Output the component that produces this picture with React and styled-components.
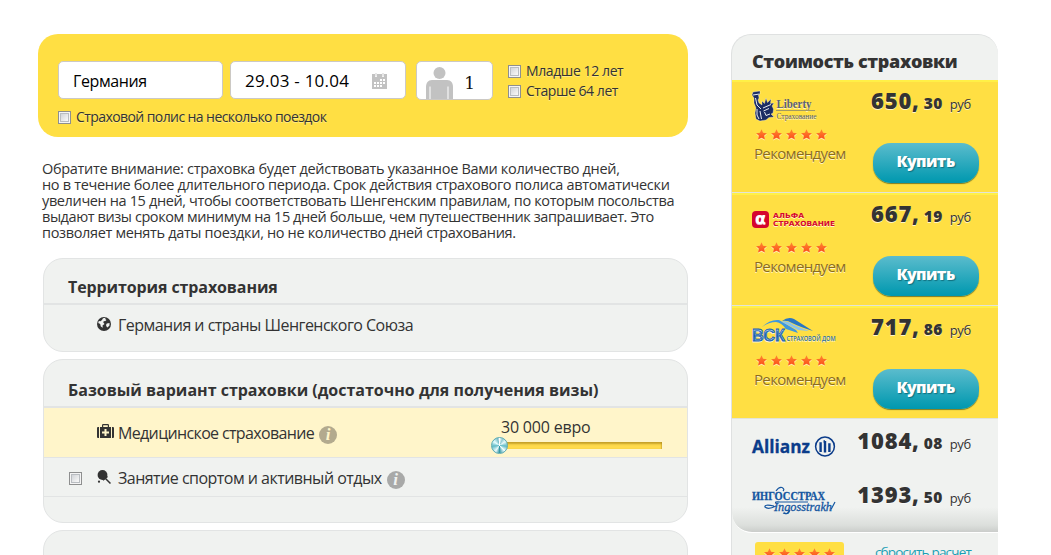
import React from "react";
import styled, { createGlobalStyle, css } from "styled-components";

const Global = createGlobalStyle`
  * { box-sizing: border-box; }
  html, body { margin: 0; background: #fff; }
  body {
    height: 555px; overflow: hidden; color: #333;
    font-family: "Open Sans", "Noto Sans", sans-serif; font-size: 14px;
  }
`;

const Page = styled.div`
  display: flex;
  align-items: flex-start;
  gap: 43px;
  width: 1051px;
  height: 555px;
  padding: 34px 0 0 38px;
  overflow: hidden;
`;
const Main = styled.main`
  width: 650px;
  flex: none;
`;
const Text = styled.span`
  display: block;
  white-space: nowrap;
  letter-spacing: ${(p) => p.$ls || 0}px;
`;

/* ---------- search form ---------- */
const SearchPanel = styled.form`
  height: 103px;
  padding: 27px 20px 0;
  border-radius: 20px;
  background: #ffdf43;
`;
const Fields = styled.div`
  display: flex;
  align-items: flex-start;
  height: 39px;
`;
const Field = styled.div`
  display: flex;
  align-items: center;
  width: ${(p) => p.$w}px;
  height: ${(p) => p.$h || 38}px;
  margin-right: ${(p) => p.$gap}px;
  padding: ${(p) => p.$pad || "2px 18px 0 14px"};
  justify-content: space-between;
  border: 1px solid #ccc9c4;
  border-radius: 5px;
  background: #fff;
  color: #000;
  font-size: ${(p) => p.$size || 16}px;
  line-height: 24px;
`;
const Count = styled.span`
  font: 17px/20px "DejaVu Serif", serif;
  color: #111;
  margin: 0 7px 0 0;
`;
const Checks = styled.div`
  display: grid;
`;
const Check = styled.label`
  display: flex;
  align-items: center;
  gap: 5px;
  height: 20px;
  font-size: 14px;
  line-height: 18px;
  margin-top: ${(p) => p.$top || 0}px;
  text-shadow: 0 1px 0 rgba(255, 255, 255, 0.35);
`;
const Box = styled.span`
  flex: none;
  width: 13px;
  height: 13px;
  border: 1px solid #8e8f8f;
  box-shadow: inset 0 0 0 1px #f4f4f4, inset 0 0 0 2px #b9bdc1;
  background: linear-gradient(135deg, #c6cacf, #f6f6f6 75%);
`;

const Notice = styled.p`
  margin: 24px 0 17px 4px;
  font-size: 14.5px;
  line-height: 16px;
`;

/* ---------- option panels ---------- */
const Panel = styled.section`
  height: ${(p) => p.$h}px;
  margin: 0 0 7px 5px;
  border: 1px solid #e2e4e4;
  border-radius: 20px;
  background: #f0f2f0;
`;
const PanelTitle = styled.h2`
  height: ${(p) => p.$h || 46}px;
  margin: 0;
  padding: ${(p) => p.$top || 17}px 0 0 24px;
  border-bottom: 2px solid #e2e4e4;
  font-size: 16px;
  line-height: 22px;
  font-weight: 700;
`;
const Row = styled.div`
  display: flex;
  align-items: center;
  height: ${(p) => p.$h}px;
  padding: ${(p) => p.$top || 0}px 0 0 25px;
  font-size: 16px;
  line-height: 22px;
  ${(p) => p.$line && css`border-bottom: 1px solid #e2e4e4;`}
  ${(p) => p.$active && css`background: #fff5ca;`}
`;
const CheckSlot = styled.span`
  flex: none;
  display: flex;
  width: 28px;
  padding-top: 2px;
`;
const IconSlot = styled.span`
  flex: none;
  display: flex;
  width: 21px;
  padding-bottom: ${(p) => p.$lift || 2}px;
`;
const Info = styled.span`
  display: flex;
  justify-content: center;
  width: 18px;
  height: 18px;
  margin: 4px 0 0 5px;
  border-radius: 50%;
  background: ${(p) => p.$bg};
  color: ${(p) => p.$fg};
  font: italic bold 17px/17px "Liberation Serif", serif;
`;
const Range = styled.div`
  position: relative;
  width: 162px;
  height: 47px;
  margin: 0 25px 0 auto;
  padding-left: 1px;
`;
const RangeValue = styled.div`
  height: 29px;
  padding-top: 6px;
`;
const Track = styled.div`
  height: 7px;
  background: #ffda4b;
  box-shadow: inset 0 2px 2px rgba(130, 95, 0, 0.45), inset -1px 0 1px rgba(130, 95, 0, 0.2);
  margin-top: 3px;
`;
const Knob = styled.span`
  position: absolute;
  left: -9px;
  top: 27px;
  width: 17px;
  height: 17px;
  border-radius: 50%;
  border: 1px solid #5aa9b3;
  background: conic-gradient(#fff 0deg, #8fcbd3 25deg, #e8fafa 55deg, #5fbac6 95deg, #f2ffff 135deg, #3598a6 180deg, #effcfc 215deg, #5fbac6 265deg, #e8ffff 305deg, #76bdc8 345deg, #fff 360deg);
`;

/* ---------- price column ---------- */
const Side = styled.aside`
  width: 267px;
  height: 560px;
  flex: none;
  border: 1px solid #dfe1e1;
  border-right: 0;
  border-bottom: 0;
  border-radius: 20px 20px 0 0;
  background: #f0f2f0;
`;
const SideTitle = styled.h2`
  height: 45px;
  margin: 0;
  padding: 14px 0 0 20px;
  font-size: 18px;
  line-height: 24px;
  font-weight: 800;
`;
const Offer = styled.article`
  display: grid;
  grid-template-columns: 100px 1fr;
  height: 113px;
  padding: 0 19px 0 20px;
  border-bottom: 1px solid #e2e4d8;
  box-shadow: inset 0 2px 0 #fff047;
  background: #ffdf43;
  text-shadow: 0 1px 0 rgba(255, 255, 255, 0.7);
`;
const OfferInfo = styled.div`
  padding-top: 11px;
`;
const LogoSlot = styled.div`
  display: flex;
  height: 38px;
`;
const Recommend = styled.div`
  padding: 2px 0 0 2px;
  font-size: 15px;
  line-height: 20px;
  color: #8c6c1c;
`;
const OfferBuy = styled.div`
  display: flex;
  flex-direction: column;
  align-items: flex-end;
`;
const Price = styled.div`
  display: flex;
  align-items: baseline;
  height: 30px;
  margin: ${(p) => p.$top || 0}px ${(p) => p.$right || 0}px 0 0;
  line-height: 30px;
  white-space: nowrap;
  text-shadow: 0 1px 0 rgba(255, 255, 255, 0.7);
`;
const Rub = styled.span`
  font-size: 22px;
  font-weight: 800;
  letter-spacing: 0.8px;
`;
const Kop = styled.span`
  margin-left: 4px;
  font-size: 15.5px;
  font-weight: 800;
  letter-spacing: 0.4px;
`;
const Cur = styled.span`
  margin-left: 7px;
  font-size: 13px;
  letter-spacing: -0.3px;
`;
const Buy = styled.button`
  width: 106px;
  height: 40px;
  margin-top: 28px;
  padding: 0 1px 5px 0;
  border: 0;
  border-radius: 18px;
  background: linear-gradient(#5bbccd, #0c9db3 85%, #0098af);
  box-shadow: 0 1px 1px #7b7a26;
  color: #fff;
  font: 800 16px/22px "Open Sans", sans-serif;
  letter-spacing: -0.6px;
  text-shadow: 1px 1px 1px rgba(0, 60, 70, 0.5);
`;
const PlainOffers = styled.div`
  height: 114px;
  padding: 0 20px;
  border-bottom: 1px solid #fff;
  border-radius: 0 0 0 20px;
  background: linear-gradient(rgba(240,242,240,0) 78%, #dcdfdc 94%, #cbcdcb);
`;
const PlainOffer = styled.article`
  display: grid;
  grid-template-columns: 84px 1fr;
  justify-items: end;
  height: 54px;
`;
const PlainLogo = styled.div`
  width: 84px;
  padding-top: ${(p) => p.$top}px;
`;
const Footer = styled.footer`
  display: flex;
  justify-content: space-between;
  padding: 9px 27px 0 23px;
`;
const Badge = styled.div`
  width: 89px;
  height: 30px;
  padding: 6px 0 0 8px;
  border-radius: 3px;
  background: #ffdf43;
`;
const Reset = styled.a`
  font-size: 13.5px;
  line-height: 21px;
  color: #1b9fb4;
`;

const Art = styled.svg`
  display: block;
  flex: none;
  overflow: visible;
`;

const STAR = "M5.5 0.3 L7.1 3.8 L10.9 4.2 L8.1 6.8 L8.9 10.6 L5.5 8.7 L2.1 10.6 L2.9 6.8 L0.1 4.2 L3.9 3.8Z";
function Stars({ left = 4 }) {
  return (
    <Art width="84" height="12" viewBox="0 0 84 12">
      <defs>
        <linearGradient id="star" x1="0" y1="0" x2="0" y2="1">
          <stop offset="0" stopColor="#ff8a2e" />
          <stop offset="1" stopColor="#fb4a1c" />
        </linearGradient>
      </defs>
      {[0, 1, 2, 3, 4].map((i) => (
        <g key={i} transform={`translate(${left + i * 15} 0)`}>
          <path d={STAR} fill="#fff" opacity=".6" transform="translate(0 1)" />
          <path d={STAR} fill="url(#star)" />
        </g>
      ))}
    </Art>
  );
}

const CalendarIcon = () => (
  <Art width="15" height="16" viewBox="0 0 15 16">
    <path fill="#c2c2c2" d="M0 1h3v3h2V1h5v3h2V1h3v15H0zM3.6 0h.8v3.4h-.8zM10.6 0h.8v3.4h-.8z" />
    <path fill="#fff" d="M8 6h2v2H8zM11 6h2v2h-2zM2 9h2v2H2zM5 9h2v2H5zM8 9h2v2H8zM11 9h2v2h-2zM2 12h2v2H2zM5 12h2v2H5zM8 12h2v2H8z" />
  </Art>
);
const PersonIcon = () => (
  <Art width="27" height="32" viewBox="0 0 27 32">
    <g fill="#c2c2c2">
      <circle cx="13.5" cy="6" r="6" />
      <path d="M6 13h15c4 0 6 3 6 7v12h-4.500V19.500h-1V32h-17V19.500h-1V32H0V20c0-4 2-7 6-7z" />
    </g>
  </Art>
);
const GlobeIcon = () => (
  <Art width="14" height="14" viewBox="0 0 14 14">
    <circle cx="7" cy="7" r="7" fill="#333" />
    <path fill="#f0f2f0" d="M6 1.200 8.500.8 8.200 2 9.500 3 8 4.300 7 4 6.200 5.300 7.500 7 5.500 8.500 5.800 10.800 3.800 9.500 3.200 7 1.200 6 1.800 4 3.500 4.200 5 3zM9.800 6.500 12.500 6 12.500 8.500 10.500 10.500 9.500 9.500 9 8z" />
  </Art>
);
const MedkitIcon = () => (
  <Art width="17" height="14" viewBox="0 0 17 14">
    <path fill="#333" d="M0 4Q0 3 1 3h1v11H1q-1 0-1-1zM17 4q0-1-1-1h-1v11h1q1 0 1-1zM3 3h2V1.200Q5 0 6.200 0h4.600Q12 0 12 1.200V3h2v11H3zM6.200 3h4.600V1.200H6.200z" />
    <path fill="#fff5ca" d="M7.500 5h2v2.500H12v2H9.500V12h-2V9.500H5v-2h2.500z" />
  </Art>
);
const RacketIcon = () => (
  <Art width="14" height="14" viewBox="0 0 14 14">
    <circle cx="5.500" cy="5" r="4.900" fill="#333" />
    <circle cx="2" cy="11.700" r="1.100" fill="#333" />
    <path d="M8 8 13.500 13.500" stroke="#333" strokeWidth="1.500" />
    <path d="M6 10.300 10.500 6.500" stroke="#333" strokeWidth="1.300" />
  </Art>
);

const LibertyLogo = () => (
  <Art width="84" height="31" viewBox="0 0 84 31">
    <path
      fill="#1c2d63"
      stroke="#fff"
      strokeOpacity=".55"
      strokeWidth=".6"
      d="M1 1 8 0 8 3 6.500 4 7 7 6 9 7 12 10 14 10 10 12.500 12.500 14 7 15.500 11.500 19 8 18.500 12.500 22 12 20 15 21.500 18 21 22 19 23 22 26 17 26.500 14 29 8 30 4 28 3 22 4 17 2 12 2 7 0 4z"
    />
    <path
      fill="none"
      stroke="#fff"
      strokeWidth=".9"
      d="M1 4 7.500 3M3.500 7 5 14 9 18M11 17 19 13.500M11.500 20 17 17.500M8 20 9.500 28M12.500 21 14 24.500 18 23M5 18 5 24 7 28"
    />
    <text x="24.500" y="17" fontFamily="Liberation Serif" fontWeight="700" fontSize="12.500" fill="#5b6074" textLength="35" lengthAdjust="spacingAndGlyphs">Liberty</text>
    <path d="M24 19.500h39" stroke="#a39a62" />
    <text x="24.500" y="27.500" fontFamily="Liberation Serif" fontSize="8" fill="#555b73" textLength="40" lengthAdjust="spacingAndGlyphs">Страхование</text>
  </Art>
);
const AlfaLogo = () => (
  <Art width="84" height="31" viewBox="0 0 84 31">
    <rect x="0" y="7" width="17" height="17" rx="4" fill="#d5062e" />
    <text x="3" y="19.800" fontFamily="DejaVu Sans" fontWeight="700" fontSize="16" fill="#fff" textLength="11" lengthAdjust="spacingAndGlyphs">α</text>
    <g fontFamily="DejaVu Sans" fontWeight="700" fontSize="7" fill="#d5062e">
      <text x="21" y="14" textLength="31" lengthAdjust="spacingAndGlyphs">АЛЬФА</text>
      <text x="21" y="21.500" textLength="62" lengthAdjust="spacingAndGlyphs">СТРАХОВАНИЕ</text>
    </g>
  </Art>
);
const VskLogo = () => (
  <Art width="84" height="31" viewBox="0 0 84 31">
    <defs>
      <linearGradient id="vsk" x1="0" y1="0" x2="0" y2="1">
        <stop offset="0" stopColor="#4c98d8" />
        <stop offset=".5" stopColor="#1558a5" />
        <stop offset="1" stopColor="#2f7cc4" />
      </linearGradient>
    </defs>
    <path fill="#3f98dd" d="M10 10Q18 2 27 3L44 13 46 16 34 12Q30 6 24 5 17 5 10 10z" />
    <path fill="#2877c4" d="M30 4Q36-.5 42 2L61 14Q48 10 40 6 35 3 30 4z" />
    <path fill="#8cc4ea" d="M29 4.500Q36 3 42 8L57 14 46 13z" />
    <text x="0" y="24" fontFamily="Liberation Sans" fontWeight="700" fontSize="17" fill="url(#vsk)" stroke="#1b62b0" strokeWidth=".8" textLength="33" lengthAdjust="spacingAndGlyphs">ВСК</text>
    <text x="34.500" y="23.500" fontFamily="Open Sans" fontWeight="600" fontSize="6.500" fill="#2a6fa8" textLength="49" lengthAdjust="spacingAndGlyphs">СТРАХОВОЙ ДОМ</text>
  </Art>
);
const AllianzLogo = () => (
  <Art width="84" height="22" viewBox="0 0 84 22">
    <text x="0" y="16.500" fontFamily="Open Sans" fontWeight="700" fontSize="17.500" fill="#0b3c8a" stroke="#0b3c8a" strokeWidth=".3" textLength="58" lengthAdjust="spacingAndGlyphs">Allianz</text>
    <circle cx="73" cy="10.500" r="9.400" fill="none" stroke="#0b3c8a" strokeWidth="1.500" />
    <path fill="none" stroke="#0b3c8a" strokeWidth="2.400" d="M68.600 16V7.500h-1.200M73 16.500V5M71.500 5.500H73M77.400 16V8.500h-1.200" />
  </Art>
);
const IngosLogo = () => (
  <Art width="84" height="28" viewBox="0 0 84 28">
    <text x="0" y="13" fontFamily="Liberation Serif" fontWeight="700" fontSize="12.500" fill="#1556a0" stroke="#1556a0" strokeWidth=".3" textLength="73" lengthAdjust="spacingAndGlyphs">ИНГОССТРАХ</text>
    <text x="22" y="23.500" fontFamily="Liberation Serif" fontStyle="italic" fontSize="12" fill="#1556a0" stroke="#1556a0" strokeWidth=".3" textLength="58" lengthAdjust="spacingAndGlyphs">Ingosstrakh</text>
    <path fill="none" stroke="#1556a0" strokeWidth="1.200" d="M24 4Q27-.5 30 .5 33 2 31 4M22 19Q12 17 13 20 16 23 24 19M24 16Q22 14.500 28 15H56M38 23Q36 28 31 26M79 22.500 83 15" />
  </Art>
);

const offers = [
  { Logo: LibertyLogo, rub: "650,", kop: "30" },
  { Logo: AlfaLogo, rub: "667,", kop: "19" },
  { Logo: VskLogo, rub: "717,", kop: "86" },
];

function PriceTag({ rub, kop, top, right }) {
  return (
    <Price $top={top} $right={right}>
      <Rub>{rub}</Rub>
      <Kop>{kop}</Kop>
      <Cur>руб</Cur>
    </Price>
  );
}

export default function App() {
  return (
    <Page>
      <Global />
      <Main>
        <SearchPanel>
          <Fields>
            <Field $w={165} $gap={7}><Text $ls={-0.4}>Германия</Text></Field>
            <Field $w={176} $gap={10} $size={17}><Text $ls={0.25}>29.03 - 10.04</Text><CalendarIcon /></Field>
            <Field $w={77} $h={39} $gap={15} $pad="5px 10px 0 9px"><PersonIcon /><Count>1</Count></Field>
            <Checks>
              <Check><Box /><Text $ls={-0.4}>Младше 12 лет</Text></Check>
              <Check><Box /><Text $ls={-0.45}>Старше 64 лет</Text></Check>
            </Checks>
          </Fields>
          <Check $top={7}><Box /><Text $ls={-0.58}>Страховой полис на несколько поездок</Text></Check>
        </SearchPanel>

        <Notice>
          <Text $ls={-0.32}>Обратите внимание: страховка будет действовать указанное Вами количество дней,</Text>
          <Text $ls={-0.32}>но в течение более длительного периода. Срок действия страхового полиса автоматически</Text>
          <Text $ls={-0.37}>увеличен на 15 дней, чтобы соответствовать Шенгенским правилам, по которым посольства</Text>
          <Text $ls={-0.42}>выдают визы сроком минимум на 15 дней больше, чем путешественник запрашивает. Это</Text>
          <Text $ls={-0.34}>позволяет менять даты поездки, но не количество дней страхования.</Text>
        </Notice>

        <Panel $h={94}>
          <PanelTitle><Text $ls={-0.1}>Территория страхования</Text></PanelTitle>
          <Row $h={40}>
            <CheckSlot />
            <IconSlot><GlobeIcon /></IconSlot>
            <Text $ls={-0.52}>Германия и страны Шенгенского Союза</Text>
          </Row>
        </Panel>

        <Panel $h={164}>
          <PanelTitle $top={19} $h={48}><Text>Базовый вариант страховки (достаточно для получения визы)</Text></PanelTitle>
          <Row $h={50} $top={1} $active $line>
            <CheckSlot />
            <IconSlot $lift={4}><MedkitIcon /></IconSlot>
            <Text $ls={-0.65}>Медицинское страхование</Text>
            <Info $bg="#b3aa8e" $fg="#fff5ca">i</Info>
            <Range>
              <RangeValue><Text $ls={-0.2}>30 000 евро</Text></RangeValue>
              <Track />
              <Knob />
            </Range>
          </Row>
          <Row $h={39} $top={1} $line>
            <CheckSlot><Box /></CheckSlot>
            <IconSlot><RacketIcon /></IconSlot>
            <Text $ls={-0.52}>Занятие спортом и активный отдых</Text>
            <Info $bg="#a8a9a8" $fg="#f0f2f0">i</Info>
          </Row>
        </Panel>
        <Panel $h={120} />
      </Main>

      <Side>
        <SideTitle><Text $ls={-0.35}>Стоимость страховки</Text></SideTitle>
        {offers.map(({ Logo, rub, kop }) => (
          <Offer key={rub}>
            <OfferInfo>
              <LogoSlot><Logo /></LogoSlot>
              <Stars />
              <Recommend><Text $ls={-0.65}>Рекомендуем</Text></Recommend>
            </OfferInfo>
            <OfferBuy>
              <PriceTag rub={rub} kop={kop} top={5} right={8} />
              <Buy type="button">Купить</Buy>
            </OfferBuy>
          </Offer>
        ))}
        <PlainOffers>
          <PlainOffer>
            <PlainLogo $top={17}><AllianzLogo /></PlainLogo>
            <PriceTag rub="1084," kop="08" top={6} right={7} />
          </PlainOffer>
          <PlainOffer>
            <PlainLogo $top={14}><IngosLogo /></PlainLogo>
            <PriceTag rub="1393," kop="50" top={6} right={7} />
          </PlainOffer>
        </PlainOffers>
        <Footer>
          <Badge><Stars left={1} /></Badge>
          <Reset><Text $ls={-0.8}>сбросить расчет</Text></Reset>
        </Footer>
      </Side>
    </Page>
  );
}
